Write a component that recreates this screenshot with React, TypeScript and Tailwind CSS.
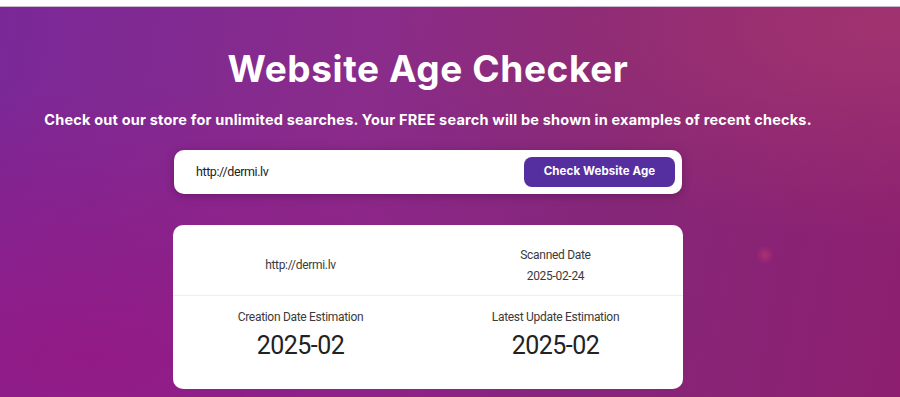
import React from "react";

const Stat: React.FC<{ label: string; value: string; big?: boolean }> = ({ label, value, big }) => (
  <div className="flex flex-col items-center justify-center">
    <span className="text-[12px] leading-[16px] tracking-[-0.3px] text-[#3a3a3a]">{label}</span>
    <span
      className={
        big
          ? "mt-[6px] text-[25px] leading-[30px] tracking-[-0.5px] text-[#222]"
          : "mt-[5px] text-[12px] leading-[16px] tracking-[-0.3px] text-[#3a3a3a]"
      }
    >
      {value}
    </span>
  </div>
);

export default function App() {
  return (
    <div className="w-[900px] h-[397px] overflow-hidden bg-white font-['Roboto',sans-serif]">
      <div className="h-[7px] bg-white border-b border-[#cbb9cf]" />
      <section className="h-[390px] bg-[radial-gradient(circle_at_765px_248px,rgba(200,60,110,0.55)_0px,transparent_9px),radial-gradient(ellipse_at_98%_5%,#a0336f_0%,transparent_40%),radial-gradient(ellipse_at_10%_90%,#921a86_0%,transparent_55%),linear-gradient(100deg,#7a2898_0%,#8a2c8a_40%,#842779_65%,#8e1f70_100%)]">
        <div className="w-[856px] flex flex-col items-center">
          <h1 className="mt-[38px] text-white font-['Inter',sans-serif] font-bold text-[37px] leading-[48px] tracking-[0.6px]">
            Website Age Checker
          </h1>
          <p className="mt-[17px] text-white font-['Inter',sans-serif] font-bold text-[14.5px] leading-[20px] tracking-[0.2px]">
            Check out our store for unlimited searches. Your FREE search will be shown in examples of recent checks.
          </p>
          <div className="mt-[20px] w-[508px] h-[44px] bg-white rounded-[10px] shadow-[0_2px_8px_rgba(60,0,60,0.35)] flex items-center justify-between pl-[22px] pr-[7px]">
            <span className="text-[12.5px] tracking-[-0.4px] text-[#222]">http://dermi.lv</span>
            <button className="w-[151px] h-[30px] rounded-[8px] bg-[#552f9f] text-white font-['Inter',sans-serif] font-bold text-[11.5px] tracking-[0.1px]">
              Check Website Age
            </button>
          </div>
          <div className="mt-[31px] w-[510px] h-[164px] bg-white rounded-[10px] flex flex-col">
            <div className="h-[71px] grid grid-cols-2 border-b border-[#eeeeee]">
              <div className="flex items-center justify-center pt-[10px]">
                <span className="text-[12px] tracking-[-0.3px] text-[#3a3a3a]">http://dermi.lv</span>
              </div>
              <div className="pt-[10px] flex items-center justify-center">
                <Stat label="Scanned Date" value="2025-02-24" />
              </div>
            </div>
            <div className="flex-1 grid grid-cols-2 pt-[13px] items-start">
              <Stat label="Creation Date Estimation" value="2025-02" big />
              <Stat label="Latest Update Estimation" value="2025-02" big />
            </div>
          </div>
        </div>
      </section>
    </div>
  );
}
